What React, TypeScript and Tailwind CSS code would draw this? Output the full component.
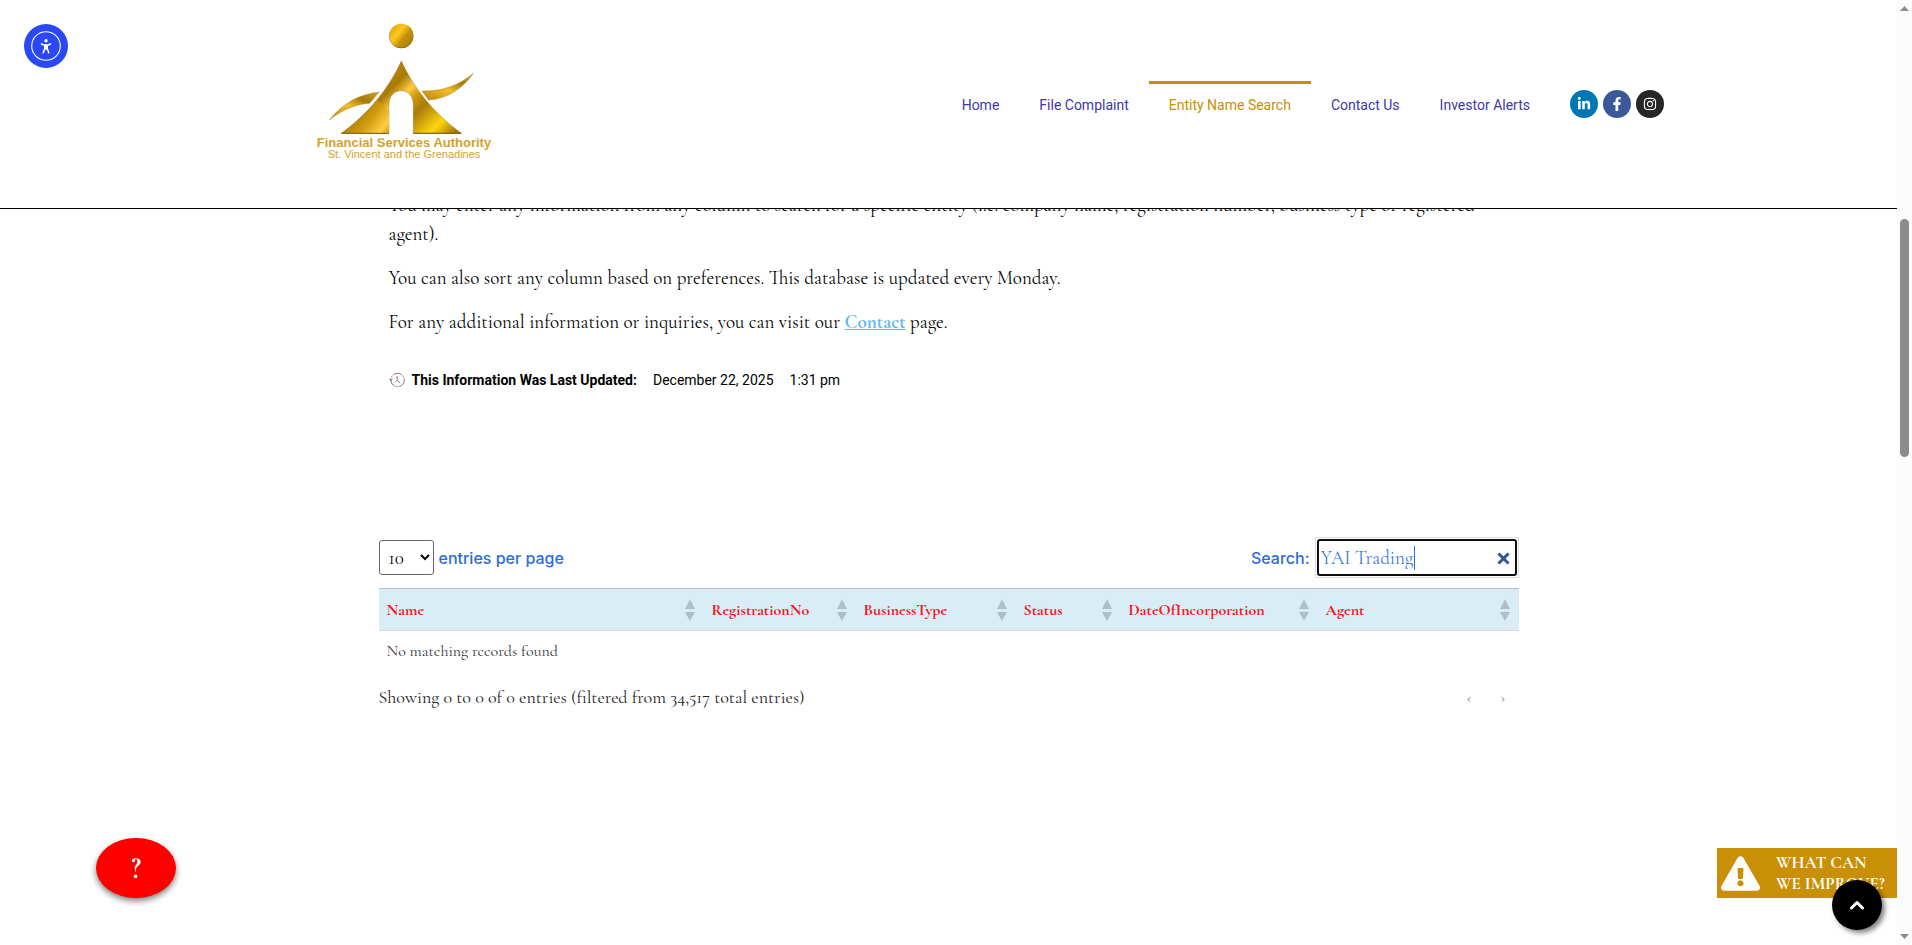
import { useState } from "react";
import { FaExclamationTriangle, FaFacebookF, FaInstagram, FaLinkedinIn } from "react-icons/fa";

const navItems = [
  { label: "Home" },
  { label: "File Complaint" },
  { label: "Entity Name Search", active: true },
  { label: "Contact Us" },
  { label: "Investor Alerts" },
];

const socials = [
  { label: "LinkedIn", icon: FaLinkedinIn, color: "bg-[#0077b5]" },
  { label: "Facebook", icon: FaFacebookF, color: "bg-[#3b5998]" },
  { label: "Instagram", icon: FaInstagram, color: "bg-[#262626]" },
];

const columns = [
  { label: "Name", width: "w-[325px]" },
  { label: "RegistrationNo", width: "w-[152px]" },
  { label: "BusinessType", width: "w-[160px]" },
  { label: "Status", width: "w-[105px]" },
  { label: "DateOfIncorporation", width: "w-[197px]" },
  { label: "Agent", width: "" },
];

function Logo() {
  return (
    <a href="#" className="flex w-[182px] flex-col items-center font-['Liberation_Sans',sans-serif] text-[#d2a32a]">
      <svg viewBox="70 36 546 336" className="w-full" aria-hidden="true">
        <defs>
          <linearGradient id="ball" x1="0" y1="0.1" x2="1" y2="0.9">
            <stop offset="0" stopColor="#d79f0c" />
            <stop offset="0.38" stopColor="#ffc81e" />
            <stop offset="0.62" stopColor="#c48f08" />
            <stop offset="1" stopColor="#a67a08" />
          </linearGradient>
          <linearGradient id="body" gradientUnits="userSpaceOnUse" x1="210" y1="190" x2="440" y2="420">
            <stop offset="0" stopColor="#c8950a" />
            <stop offset="0.18" stopColor="#b98706" />
            <stop offset="0.3" stopColor="#a87a07" />
            <stop offset="0.42" stopColor="#ffcc44" />
            <stop offset="0.5" stopColor="#d09c10" />
            <stop offset="0.62" stopColor="#a97b08" />
            <stop offset="0.84" stopColor="#ffd60e" />
            <stop offset="1" stopColor="#a67707" />
          </linearGradient>
          <linearGradient id="leg" gradientUnits="userSpaceOnUse" x1="205" y1="290" x2="305" y2="370">
            <stop offset="0" stopColor="#a97c08" />
            <stop offset="0.4" stopColor="#d09c0e" />
            <stop offset="0.75" stopColor="#ffce45" />
            <stop offset="1" stopColor="#c48f0a" />
          </linearGradient>
          <linearGradient id="wing" x1="0" y1="1" x2="1" y2="0">
            <stop offset="0" stopColor="#b8860b" />
            <stop offset="0.45" stopColor="#f3bd25" />
            <stop offset="0.7" stopColor="#a87a08" />
            <stop offset="1" stopColor="#d6a01b" />
          </linearGradient>
        </defs>
        <circle cx="335" cy="76" r="36" fill="#6d5208" />
        <circle cx="335" cy="74" r="36" fill="url(#ball)" />
        <path d="M119 327C160 275 210 250 268 243L240 277C200 279 155 298 119 327Z" fill="url(#wing)" stroke="#8a6508" strokeWidth="1" />
        <path d="M397 240C455 241 505 226 551 187C518 235 470 264 417 267Z" fill="url(#wing)" stroke="#8a6508" strokeWidth="1" />
        <path
          d="M335 150C372 230 430 305 515 367H371V281C371 254 355 239 335 239S298 254 298 281V367H155C240 305 298 230 335 150Z"
          fill="url(#body)"
          stroke="#7b5a08"
          strokeWidth="1"
        />
        <path d="M157 366C200 334 236 300 262 266L298 300V366Z" fill="url(#leg)" />
        <path d="M155 367H298M371 367H515" stroke="#76560a" strokeWidth="3" />
      </svg>
      <span className="mt-[2px] whitespace-nowrap text-[13px] leading-3 font-bold">Financial Services Authority</span>
      <span className="whitespace-nowrap text-[11px] leading-[11px]">St. Vincent and the Grenadines</span>
    </a>
  );
}

function Header() {
  return (
    <header className="relative z-10 h-[209px] border-b border-black bg-white font-['Roboto',sans-serif]">
      <div className="mx-auto flex max-w-[1431px] items-start justify-between pl-20">
        <div className="pt-[23px]">
          <Logo />
        </div>
        <div className="flex items-center gap-5 pt-[81px]">
          <nav className="flex">
            {navItems.map((item) => (
              <a
                key={item.label}
                href="#"
                className={
                  item.active
                    ? "border-t-3 border-[#c98f00] px-5 py-[11px] text-sm text-[#c98f00]"
                    : "border-t-3 border-transparent px-5 py-[11px] text-sm text-[#4038a8]"
                }
              >
                {item.label}
              </a>
            ))}
          </nav>
          <div className="flex gap-[5px]">
            {socials.map(({ label, icon: Icon, color }) => (
              <a
                key={label}
                href="#"
                aria-label={label}
                className={`flex size-7 items-center justify-center rounded-full text-white ${color}`}
              >
                <Icon size={14} />
              </a>
            ))}
          </div>
        </div>
      </div>
      <button
        type="button"
        aria-label="Accessibility"
        className="absolute top-6 left-6 flex size-11 items-center justify-center rounded-full bg-[#2a48f5]"
      >
        <svg viewBox="0 0 30 30" className="size-[30px]" fill="none" stroke="#fff" strokeLinecap="round" strokeLinejoin="round">
          <circle cx="15" cy="15" r="14.3" strokeWidth="1.1" />
          <circle cx="15" cy="9.8" r="1.7" fill="#fff" stroke="none" />
          <path d="M10.4 13L13.5 14.2H16.5L19.6 13" strokeWidth="1.5" />
          <path d="M13.8 14.5V17.6L12.2 21.8M16.2 14.5V17.6L17.8 21.8" strokeWidth="1.5" />
          <path d="M15 14.2V17.4" strokeWidth="2.6" />
        </svg>
      </button>
    </header>
  );
}

function Intro() {
  return (
    <section className="-mt-[19px] px-[10px]">
      <div className="space-y-[15px] text-[19px] leading-[29px] text-black">
        <p>
          You may enter any information from any column to search for a specific entity (i.e. company name, registration
          number, business type or registered agent).
        </p>
        <p>You can also sort any column based on preferences. This database is updated every Monday.</p>
        <p>
          For any additional information or inquiries, you can visit our{" "}
          <a href="#" className="font-bold text-[#61b8f0] underline">
            Contact
          </a>{" "}
          page.
        </p>
      </div>
      <div className="mt-[34px] flex items-center gap-4 font-['Roboto',sans-serif] text-sm text-black">
        <span className="flex items-center gap-[7px] font-bold">
          <svg viewBox="0 0 16 16" className="size-4" fill="none" stroke="#666b78">
            <circle cx="8.5" cy="8" r="6.7" strokeWidth="0.9" strokeDasharray="9 1.2 2 1.2" />
            <path d="M0.3 6.8L1.8 8.6L3.4 6.8" strokeWidth="0.9" />
            <path d="M8.2 4V8.3" stroke="#d06060" />
            <path d="M8.2 8.3L11.2 11" strokeWidth="0.9" />
            <path d="M8.2 8.3L6.5 10" stroke="#d06060" strokeWidth="0.8" />
          </svg>
          This Information Was Last Updated:
        </span>
        <span>December 22, 2025</span>
        <span>1:31 pm</span>
      </div>
    </section>
  );
}

function SortArrows() {
  return (
    <svg viewBox="0 0 10 22" className="h-[22px] w-[10px] shrink-0 fill-[#afbfc8]" aria-hidden="true">
      <path d="M5 0L10 10H0ZM0 13H10L5 22Z" />
    </svg>
  );
}

function EntityTable() {
  const [query, setQuery] = useState("YAI Trading");

  return (
    <section className="mt-[147px]">
      <div className="flex items-center justify-between font-['Inter',sans-serif] font-medium text-[#2a6cd8]">
        <div className="flex items-center gap-[5px]">
          <select
            id="page-size"
            defaultValue="10"
            className="h-[35px] w-[55px] rounded-[3px] border border-[#666] bg-white pl-[5px] font-['Cormorant_Garamond','Liberation_Serif',serif] text-[19px] font-normal text-black"
          >
            <option>10</option>
            <option>25</option>
            <option>50</option>
            <option>100</option>
          </select>
          <label htmlFor="page-size">entries per page</label>
        </div>
        <div className="flex items-center gap-[5px]">
          <label htmlFor="search">Search:</label>
          <div className="relative border border-[#ddd] p-px">
            <input
              id="search"
              type="text"
              value={query}
              onChange={(e) => setQuery(e.target.value)}
              className="block h-[37px] w-[200px] rounded-[3px] border-2 border-[#101010] pr-7 pl-[2px] font-['Cormorant_Garamond','Liberation_Serif',serif] text-[19px] font-normal text-[#3b78dc] outline-none"
            />
            <span className="absolute top-2 left-[98px] h-6 w-px bg-[#2a6cd8]" />
            <button type="button" aria-label="Clear search" onClick={() => setQuery("")} className="absolute top-[14px] right-2">
              <svg viewBox="0 0 13 13" className="size-[13px]" stroke="#31549b" strokeWidth="3">
                <path d="M1.5 1.5L11.5 11.5M11.5 1.5L1.5 11.5" />
              </svg>
            </button>
          </div>
        </div>
      </div>

      <table className="mt-[10px] w-full table-fixed border-collapse text-left">
        <thead>
          <tr className="h-[42px] border-t border-b border-t-[#b5bcc0] border-b-[#d5dbde] bg-[#d9edf7]">
            {columns.map((column) => (
              <th key={column.label} className={`py-0 pr-[9px] pl-2 text-base font-bold text-[#fb1020] ${column.width}`}>
                <div className="flex items-center justify-between">
                  {column.label}
                  <SortArrows />
                </div>
              </th>
            ))}
          </tr>
        </thead>
        <tbody>
          <tr>
            <td colSpan={6} className="px-2 py-2 text-base text-[#333]">
              No matching records found
            </td>
          </tr>
        </tbody>
      </table>

      <div className="mt-3 flex items-center justify-between text-lg text-[#222]">
        <span>Showing 0 to 0 of 0 entries (filtered from 34,517 total entries)</span>
        <div className="flex gap-[28px] pr-[13px] text-lg text-[#888]">
          <button type="button" aria-label="Previous">
            ‹
          </button>
          <button type="button" aria-label="Next">
            ›
          </button>
        </div>
      </div>
    </section>
  );
}

function FloatingButtons() {
  return (
    <>
      <button
        type="button"
        aria-label="Help"
        className="fixed bottom-[47px] left-24 h-[60px] w-20 rounded-[50%] bg-[#ff0000] text-[30px] font-bold text-white shadow-[0_3px_6px_rgba(0,0,0,0.5)]"
      >
        ?
      </button>
      <a
        href="#"
        className="fixed right-[15px] bottom-[47px] flex h-[50px] w-[180px] items-center gap-4 bg-[#c98f06] pl-1 text-[17px] leading-[21px] font-bold text-white"
      >
        <FaExclamationTriangle size={39} className="shrink-0" />
        <span className="whitespace-nowrap">
          WHAT CAN
          <br />
          WE IMPROVE?
        </span>
      </a>
      <button
        type="button"
        aria-label="Back to top"
        className="fixed right-[30px] bottom-[15px] flex size-[50px] items-center justify-center rounded-full bg-black shadow-[3px_3px_5px_rgba(0,0,0,0.5)]"
      >
        <svg viewBox="0 0 16 10" className="h-[10px] w-4" fill="none" stroke="#fff" strokeWidth="3" strokeLinecap="round" strokeLinejoin="round">
          <path d="M2.5 8L8 2.5L13.5 8" />
        </svg>
      </button>
    </>
  );
}

function Scrollbar() {
  return (
    <div className="sticky top-0 flex h-screen w-[15px] shrink-0 flex-col items-center bg-[#fcfcfc] py-[6px]">
      <svg viewBox="0 0 9 5" className="w-[9px] fill-[#8b8b8b]">
        <path d="M4.5 0L9 5H0Z" />
      </svg>
      <div className="mt-52 h-[238px] w-[9px] rounded-full bg-[#8b8b8b]" />
      <svg viewBox="0 0 9 5" className="mt-auto w-[9px] fill-[#8b8b8b]">
        <path d="M0 0H9L4.5 5Z" />
      </svg>
    </div>
  );
}

export default function App() {
  return (
    <div className="flex min-h-screen bg-white font-['Cormorant_Garamond','Liberation_Serif',serif]">
      <div className="min-w-0 flex-1">
        <Header />
        <main className="mx-auto max-w-[1140px]">
          <Intro />
          <EntityTable />
        </main>
      </div>
      <Scrollbar />
      <FloatingButtons />
    </div>
  );
}
